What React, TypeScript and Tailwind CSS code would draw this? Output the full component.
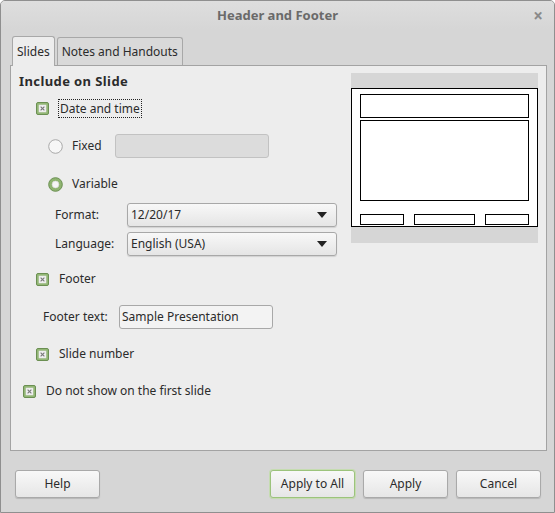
import React from 'react'

const font = { fontFamily: '"Noto Sans", "Open Sans", sans-serif' }

const Check = () => (
  <svg width="13" height="13" viewBox="0 0 13 13" className="shrink-0">
    <rect x="0.5" y="0.5" width="12" height="12" rx="1.5" fill="#93b776" stroke="#6b8f52" />
    <rect x="3" y="3" width="7" height="7" fill="#f4f4f4" stroke="#e2e2e2" strokeWidth="0.6" />
    <path d="M4.6 4.6 L8.4 8.4 M8.4 4.6 L4.6 8.4" stroke="#7a7a7a" strokeWidth="1.2" />
  </svg>
)

const Radio = ({ on }: { on?: boolean }) => (
  <svg width="15" height="15" viewBox="0 0 15 15" className="shrink-0">
    {on ? (
      <>
        <circle cx="7.5" cy="7.5" r="6.8" fill="#8fb470" stroke="#6b9052" />
        <circle cx="7.5" cy="7.5" r="3.4" fill="#f6f6f6" stroke="#d8d8d8" strokeWidth="0.6" />
      </>
    ) : (
      <circle cx="7.5" cy="7.5" r="6.8" fill="#f7f7f7" stroke="#a9a9a9" />
    )}
  </svg>
)

const Arrow = () => (
  <svg width="10" height="6" viewBox="0 0 10 6">
    <path d="M0 0 H10 L5 6 Z" fill="#222" />
  </svg>
)

const Select = ({ value }: { value: string }) => (
  <div className="w-[210px] h-[24px] flex items-center justify-between pl-[3px] pr-[9px] rounded-[3px] border border-[#a8a8a8] bg-gradient-to-b from-[#f8f8f8] to-[#e5e5e5] shadow-[0_1px_1px_rgba(0,0,0,0.12)]">
    <span>{value}</span>
    <Arrow />
  </div>
)

const Button = ({ label, def }: { label: string; def?: boolean }) => (
  <div
    className={
      'w-[85px] h-[28px] flex items-center justify-center rounded-[3px] border bg-gradient-to-b from-[#f8f8f8] to-[#e6e6e6] shadow-[0_1px_1px_rgba(0,0,0,0.15)] ' +
      (def ? 'border-[#9cc37c] ring-1 ring-[#c5dcb0]' : 'border-[#a9a9a9]')
    }
  >
    {label}
  </div>
)

export default function App() {
  return (
    <div
      style={font}
      className="w-[555px] h-[513px] flex flex-col border border-[#8f8f8f] rounded-t-[5px] bg-[#d6d6d6] text-[12px] text-[#2b2b2b] overflow-hidden"
    >
      {/* title bar */}
      <div className="h-[28px] grid grid-cols-[40px_1fr_40px] items-center bg-gradient-to-b from-[#dedede] to-[#d6d6d6]">
        <div />
        <div className="text-center font-bold text-[13px] text-[#6a6a6a] pt-[1px]">Header and Footer</div>
        <div className="flex justify-end pr-[11px] text-[#8a8a8a] text-[17px] font-bold leading-none">×</div>
      </div>

      {/* tabs */}
      <div className="flex items-end mt-[6px] ml-[11px] h-[30px] gap-[2px]">
        <div className="h-[30px] px-[4px] flex items-center border border-b-0 border-[#a8a8a8] rounded-t-[3px] bg-[#ededed] relative top-[1px] z-10">
          Slides
        </div>
        <div className="h-[28px] px-[4px] flex items-center border border-b-0 border-[#a8a8a8] rounded-t-[3px] bg-[#d9d9d9]">
          Notes and Handouts
        </div>
      </div>

      {/* panel */}
      <div className="ml-[9px] mr-[7px] h-[386px] border border-[#a3a3a3] bg-[#ededed] flex">
        <div className="flex-1 flex flex-col pt-[4px]">
          <div className="h-[24px] flex items-center pl-[8px] font-bold text-[13px] tracking-[0.4px] text-[#2b2b2b]">Include on Slide</div>

          <div className="h-[24px] mt-[2px] flex items-center pl-[25px] gap-[9px]">
            <Check />
            <span className="border border-dotted border-[#222] px-[1px] leading-[17px]">Date and time</span>
          </div>

          <div className="h-[24px] mt-[14px] flex items-center pl-[37px]">
            <Radio />
            <span className="ml-[9px] w-[43px]">Fixed</span>
            <div className="w-[154px] h-[24px] rounded-[3px] border border-[#c2c2c2] bg-[#dcdcdc]" />
          </div>

          <div className="h-[24px] mt-[14px] flex items-center pl-[37px]">
            <Radio on />
            <span className="ml-[9px]">Variable</span>
          </div>

          <div className="h-[24px] mt-[7px] flex items-center pl-[44px]">
            <span className="w-[72px]">Format:</span>
            <Select value="12/20/17" />
          </div>

          <div className="h-[24px] mt-[5px] flex items-center pl-[44px]">
            <span className="w-[72px]">Language:</span>
            <Select value="English (USA)" />
          </div>

          <div className="h-[24px] mt-[11px] flex items-center pl-[25px] gap-[10px]">
            <Check />
            <span>Footer</span>
          </div>

          <div className="h-[24px] mt-[14px] flex items-center pl-[32px]">
            <span className="w-[76px]">Footer text:</span>
            <div className="w-[154px] h-[24px] flex items-center pl-[2px] rounded-[3px] border border-[#a8a8a8] bg-[#f3f3f3]">
              Sample Presentation
            </div>
          </div>

          <div className="h-[24px] mt-[13px] flex items-center pl-[25px] gap-[10px]">
            <Check />
            <span>Slide number</span>
          </div>

          <div className="h-[24px] mt-[13px] flex items-center pl-[12px] gap-[10px]">
            <Check />
            <span>Do not show on the first slide</span>
          </div>
        </div>

        {/* preview */}
        <div className="w-[187px] h-[170px] mt-[7px] mr-[8px] bg-[#d6d6d6] pt-[15px]">
          <div className="h-[139px] border border-black bg-white px-[8px] pt-[5px] flex flex-col">
            <div className="h-[24px] border border-black" />
            <div className="h-[81px] mt-[2px] border border-black" />
            <div className="mt-[13px] h-[11px] flex justify-between">
              <div className="w-[44px] border border-black" />
              <div className="w-[61px] border border-black" />
              <div className="w-[44px] border border-black" />
            </div>
          </div>
        </div>
      </div>

      {/* buttons */}
      <div className="mt-[19px] flex items-center pl-[14px] pr-[13px]">
        <Button label="Help" />
        <div className="flex-1" />
        <div className="flex gap-[8px]">
          <Button label="Apply to All" def />
          <Button label="Apply" />
          <Button label="Cancel" />
        </div>
      </div>
    </div>
  )
}
